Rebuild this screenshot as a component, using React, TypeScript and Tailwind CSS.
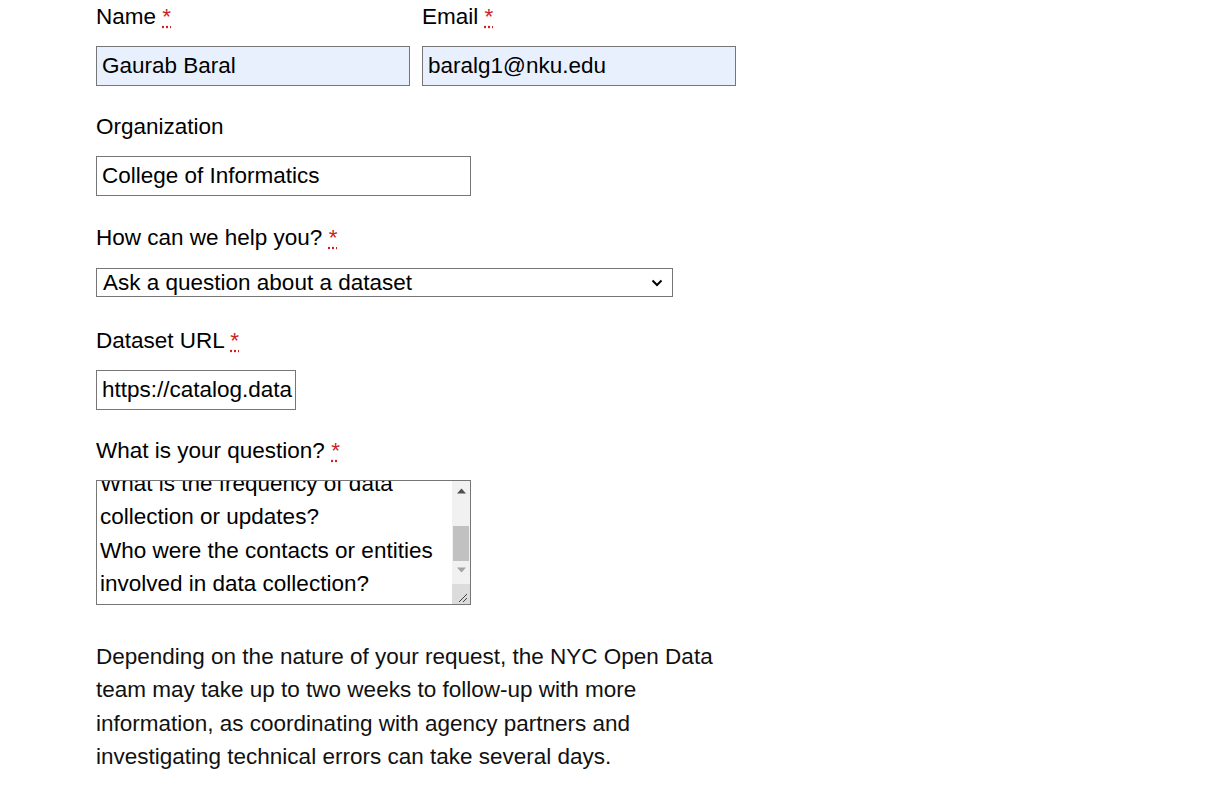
import React from "react";

function Req() {
  return (
    <abbr
      title="required"
      className="text-[#cc2222] underline decoration-dotted decoration-[#cc2222]"
    >
      *
    </abbr>
  );
}

function Label({ text, req }: { text: string; req?: boolean }) {
  return (
    <div className="h-[34px] leading-[34px] text-black whitespace-nowrap">
      {text}
      {req ? (
        <>
          {" "}
          <Req />
        </>
      ) : null}
    </div>
  );
}

export default function App() {
  return (
    <div className="w-[1210px] h-[791px] bg-white overflow-hidden font-['Liberation_Sans',Arial,sans-serif] text-[22.5px] text-black">
      <div className="ml-[96px] w-[640px] pt-0">
        {/* Name / Email */}
        <div className="flex gap-[12px]">
          <div className="w-[314px]">
            <Label text="Name" req />
            <div className="mt-[12px] h-[40px] border border-[#767676] bg-[#e8f0fe] px-[5px] flex items-center whitespace-nowrap">
              Gaurab Baral
            </div>
          </div>
          <div className="w-[314px]">
            <Label text="Email" req />
            <div className="mt-[12px] h-[40px] border border-[#767676] bg-[#e8f0fe] px-[5px] flex items-center whitespace-nowrap">
              baralg1@nku.edu
            </div>
          </div>
        </div>

        {/* Organization */}
        <div className="mt-[24px]">
          <Label text="Organization" />
          <div className="mt-[12px] w-[375px] h-[40px] border border-[#767676] bg-white px-[5px] flex items-center whitespace-nowrap">
            College of Informatics
          </div>
        </div>

        {/* How can we help */}
        <div className="mt-[25px]">
          <Label text="How can we help you?" req />
          <div className="mt-[13px] w-[577px] h-[29px] border border-[#767676] bg-white pl-[6px] pr-[8px] flex items-center justify-between whitespace-nowrap">
            <span>Ask a question about a dataset</span>
            <svg width="12" height="8" viewBox="0 0 12 8" className="mr-[1px]">
              <path d="M1.5 1.5 L6 6 L10.5 1.5" fill="none" stroke="#000" strokeWidth="2" />
            </svg>
          </div>
        </div>

        {/* Dataset URL */}
        <div className="mt-[27px]">
          <Label text="Dataset URL" req />
          <div className="mt-[12px] w-[200px] h-[40px] border border-[#767676] bg-white px-[5px] flex items-center overflow-hidden whitespace-nowrap">
            https://catalog.data
          </div>
        </div>

        {/* Question */}
        <div className="mt-[24px]">
          <Label text="What is your question?" req />
          <div className="mt-[12px] w-[375px] h-[125px] border border-[#767676] bg-white flex overflow-hidden">
            <div className="flex-1 overflow-hidden pl-[3px] leading-[33.4px] whitespace-nowrap">
              <div className="mt-[-14px]">
                <div>What is the frequency of data</div>
                <div>collection or updates?</div>
                <div>Who were the contacts or entities</div>
                <div>involved in data collection?</div>
              </div>
            </div>
            <div className="w-[18px] flex flex-col bg-[#f1f1f1]">
              <div className="h-[17px] mt-[1px] flex items-center justify-center">
                <svg width="9" height="6" viewBox="0 0 9 6">
                  <path d="M0 5.5 L4.5 0.5 L9 5.5 Z" fill="#505050" />
                </svg>
              </div>
              <div className="mt-[27px] mx-[1px] h-[35px] bg-[#c1c1c1]" />
              <div className="h-[17px] flex items-center justify-center">
                <svg width="9" height="6" viewBox="0 0 9 6">
                  <path d="M0 0.5 L4.5 5.5 L9 0.5 Z" fill="#a3a3a3" />
                </svg>
              </div>
              <div className="flex-1" />
              <div className="h-[20px] bg-[#dcdcdc] relative">
                <svg width="18" height="20" viewBox="0 0 18 20" className="absolute inset-0">
                  <path d="M7 18 L15 10 M11 18 L15 14" stroke="#404040" strokeWidth="1" />
                </svg>
              </div>
            </div>
          </div>
        </div>

        {/* Paragraph */}
        <p className="mt-[35px] leading-[33.4px] text-[#111]">
          Depending on the nature of your request, the NYC Open Data team may take up to two
          weeks to follow-up with more information, as coordinating with agency partners and
          investigating technical errors can take several days.
        </p>
      </div>
    </div>
  );
}
